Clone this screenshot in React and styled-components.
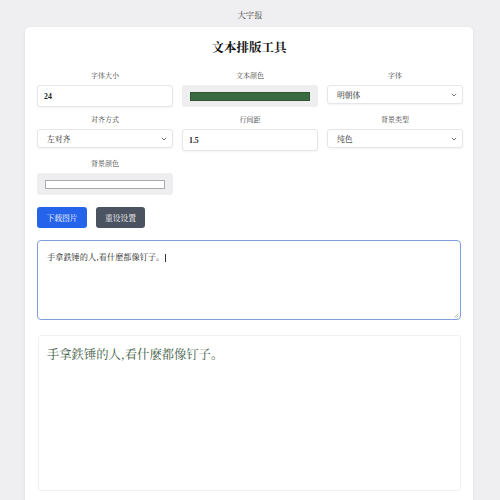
import styled, { createGlobalStyle } from "styled-components";

const Global = createGlobalStyle`
    body {
        margin: 0;
        background: #efeef1;
        font-family: "Noto Serif CJK SC", "Noto Sans CJK SC", "Liberation Serif", serif;
        color: #333;
    }
`

const Header = styled.div`
    height: 27px;
    display: flex;
    align-items: center;
    justify-content: center;
    font-size: 8.3px;
    color: #444;
`

const Card = styled.div`
    margin: 0 27px 0 25px;
    background: #fff;
    border-radius: 5px;
    box-shadow: 0 1px 4px rgba(0, 0, 0, 0.06);
    padding: 10px 12px 20px;
    display: flex;
    flex-direction: column;
`

const Title = styled.h1`
    margin: 0 0 14px;
    text-align: center;
    font-size: 12.5px;
    line-height: 20px;
    font-weight: bold;
    color: #111;
`

const Grid = styled.div`
    display: grid;
    grid-template-columns: repeat(3, 136px);
    column-gap: 9px;
    row-gap: 8px;
`

const Field = styled.div`
    display: flex;
    flex-direction: column;
    gap: 5px;
`

const Label = styled.label`
    text-align: center;
    font-size: 7px;
    line-height: 9px;
    color: #444;
`

const TextBox = styled.div`
    height: ${props => props.$h || 22}px;
    box-sizing: border-box;
    border: 1px solid #e6e6e9;
    border-radius: 3px;
    box-shadow: 0 1px 2px rgba(0, 0, 0, 0.05);
    background: #fff;
    display: flex;
    align-items: center;
    justify-content: space-between;
    padding: 0 5px 0 ${props => props.$pad || 6}px;
    font-size: 7.8px;
    color: #222;
    font-family: ${props => props.$num ? '"Liberation Serif", serif' : 'inherit'};
    font-weight: ${props => props.$num ? 600 : 'normal'};
`

const Chevron = styled.svg`
    width: 6px;
    height: 4px;
`

const ColorBox = styled.div`
    height: 22px;
    box-sizing: border-box;
    background: #eeedf0;
    border-radius: 3px;
    padding: 0 8px;
    display: flex;
    align-items: center;
`

const Swatch = styled.div`
    flex: 1;
    height: ${props => props.$h}px;
    background: ${props => props.$color};
    border: 1px solid ${props => props.$border};
`

const Buttons = styled.div`
    display: flex;
    gap: 9px;
    margin-top: 12px;
`

const Button = styled.button`
    height: 21px;
    width: ${props => props.$w}px;
    border: none;
    border-radius: 3px;
    background: ${props => props.$bg};
    color: #fff;
    font-family: inherit;
    font-size: 7.8px;
    padding: 0;
`

const TextArea = styled.div`
    margin-top: 12px;
    height: 80px;
    box-sizing: border-box;
    border: 1px solid #7f9fdc;
    border-radius: 4px;
    padding: 10px 9px;
    font-size: 8.2px;
    line-height: 11px;
    color: #222;
    position: relative;
`

const Caret = styled.span`
    display: inline-block;
    width: 1px;
    height: 8px;
    background: #333;
    vertical-align: middle;
    margin-left: 1px;
`

const Grip = styled.svg`
    position: absolute;
    right: 1px;
    bottom: 1px;
    width: 5px;
    height: 5px;
`

const Preview = styled.div`
    margin: 15px 0 0 1px;
    height: 156px;
    box-sizing: border-box;
    border: 1px solid #f0eff2;
    border-radius: 3px;
    padding: 9px 8px;
    font-size: 12.3px;
    line-height: 18px;
    color: #3d5c44;
`

const TEXT = "手拿鉄锤的人,看什麼都像钉子。"

function Arrow() {
    return (
        <Chevron viewBox="0 0 6 4">
            <path d="M0.8 0.8 L3 3 L5.2 0.8" fill="none" stroke="#666" strokeWidth="0.9" />
        </Chevron>
    )
}

function App() {
    return (
        <>
            <Global />
            <Header>大字报</Header>
            <Card>
                <Title>文本排版工具</Title>
                <Grid>
                    <Field>
                        <Label>字体大小</Label>
                        <TextBox $num>24</TextBox>
                    </Field>
                    <Field>
                        <Label>文本颜色</Label>
                        <ColorBox>
                            <Swatch $h={7} $color="#3a6b40" $border="#2f5533" />
                        </ColorBox>
                    </Field>
                    <Field>
                        <Label>字体</Label>
                        <TextBox $h={19} $pad={9}>明朝体<Arrow /></TextBox>
                    </Field>
                    <Field>
                        <Label>对齐方式</Label>
                        <TextBox $h={19} $pad={9}>左对齐<Arrow /></TextBox>
                    </Field>
                    <Field>
                        <Label>行间距</Label>
                        <TextBox $num>1.5</TextBox>
                    </Field>
                    <Field>
                        <Label>背景类型</Label>
                        <TextBox $h={19} $pad={9}>纯色<Arrow /></TextBox>
                    </Field>
                    <Field>
                        <Label>背景颜色</Label>
                        <ColorBox>
                            <Swatch $h={7} $color="#fff" $border="#aaa" />
                        </ColorBox>
                    </Field>
                </Grid>
                <Buttons>
                    <Button $w={50} $bg="#2563eb">下载图片</Button>
                    <Button $w={49} $bg="#4b5260">重设设置</Button>
                </Buttons>
                <TextArea>
                    {TEXT}<Caret />
                    <Grip viewBox="0 0 5 5">
                        <path d="M4.5 0.5 L0.5 4.5 M4.5 2.5 L2.5 4.5" stroke="#999" strokeWidth="0.7" />
                    </Grip>
                </TextArea>
                <Preview>{TEXT}</Preview>
            </Card>
        </>
    )
}

export default App;
